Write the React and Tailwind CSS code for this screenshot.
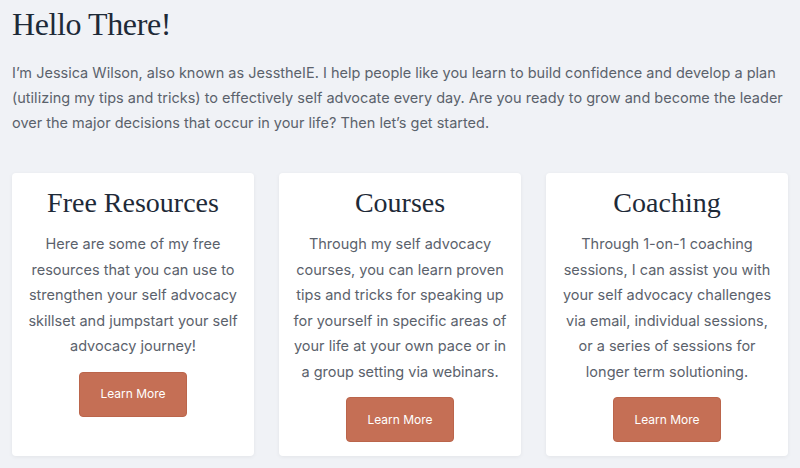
export default function App() {
  const cards = [
    {
      title: "Free Resources",
      text: "Here are some of my free resources that you can use to strengthen your self advocacy skillset and jumpstart your self advocacy journey!",
    },
    {
      title: "Courses",
      text: "Through my self advocacy courses, you can learn proven tips and tricks for speaking up for yourself in specific areas of your life at your own pace or in a group setting via webinars.",
    },
    {
      title: "Coaching",
      text: "Through 1-on-1 coaching sessions, I can assist you with your self advocacy challenges via email, individual sessions, or a series of sessions for longer term solutioning.",
    },
  ];
  return (
    <div className="w-[800px] h-[468px] overflow-hidden bg-[#f0f2f6] px-3 font-['Inter',sans-serif]">
      <h1 className="pt-1 font-['Liberation_Serif',serif] text-[32px] leading-[40px] tracking-[-0.4px] text-[#1e2a38]">
        Hello There!
      </h1>
      <p className="mt-4 text-[14.5px] leading-[25px] text-[#5b626c]">
        I’m Jessica Wilson, also known as JesstheIE. I help people like you learn to build confidence and develop a plan (utilizing my tips and tricks) to effectively self advocate every day. Are you ready to grow and become the leader over the major decisions that occur in your life? Then let’s get started.
      </p>
      <div className="mt-[38px] grid grid-cols-3 gap-[25px]">
        {cards.map((c) => (
          <div
            key={c.title}
            className="flex flex-col items-center rounded-[4px] bg-white px-[14px] pt-3 pb-[14px] shadow-[0_1px_4px_rgba(0,0,0,0.06)]"
          >
            <h2 className="font-['Liberation_Serif',serif] text-[28px] leading-[36px] text-[#1e2a38]">
              {c.title}
            </h2>
            <p className="mt-[10px] text-center text-[14.5px] leading-[25.5px] text-[#5b626c]">
              {c.text}
            </p>
            <button className="mt-[13px] h-[45px] w-[108px] rounded-[4px] border border-[#bb654b] bg-[#c56f55] text-[12px] text-white">
              Learn More
            </button>
          </div>
        ))}
      </div>
    </div>
  );
}
